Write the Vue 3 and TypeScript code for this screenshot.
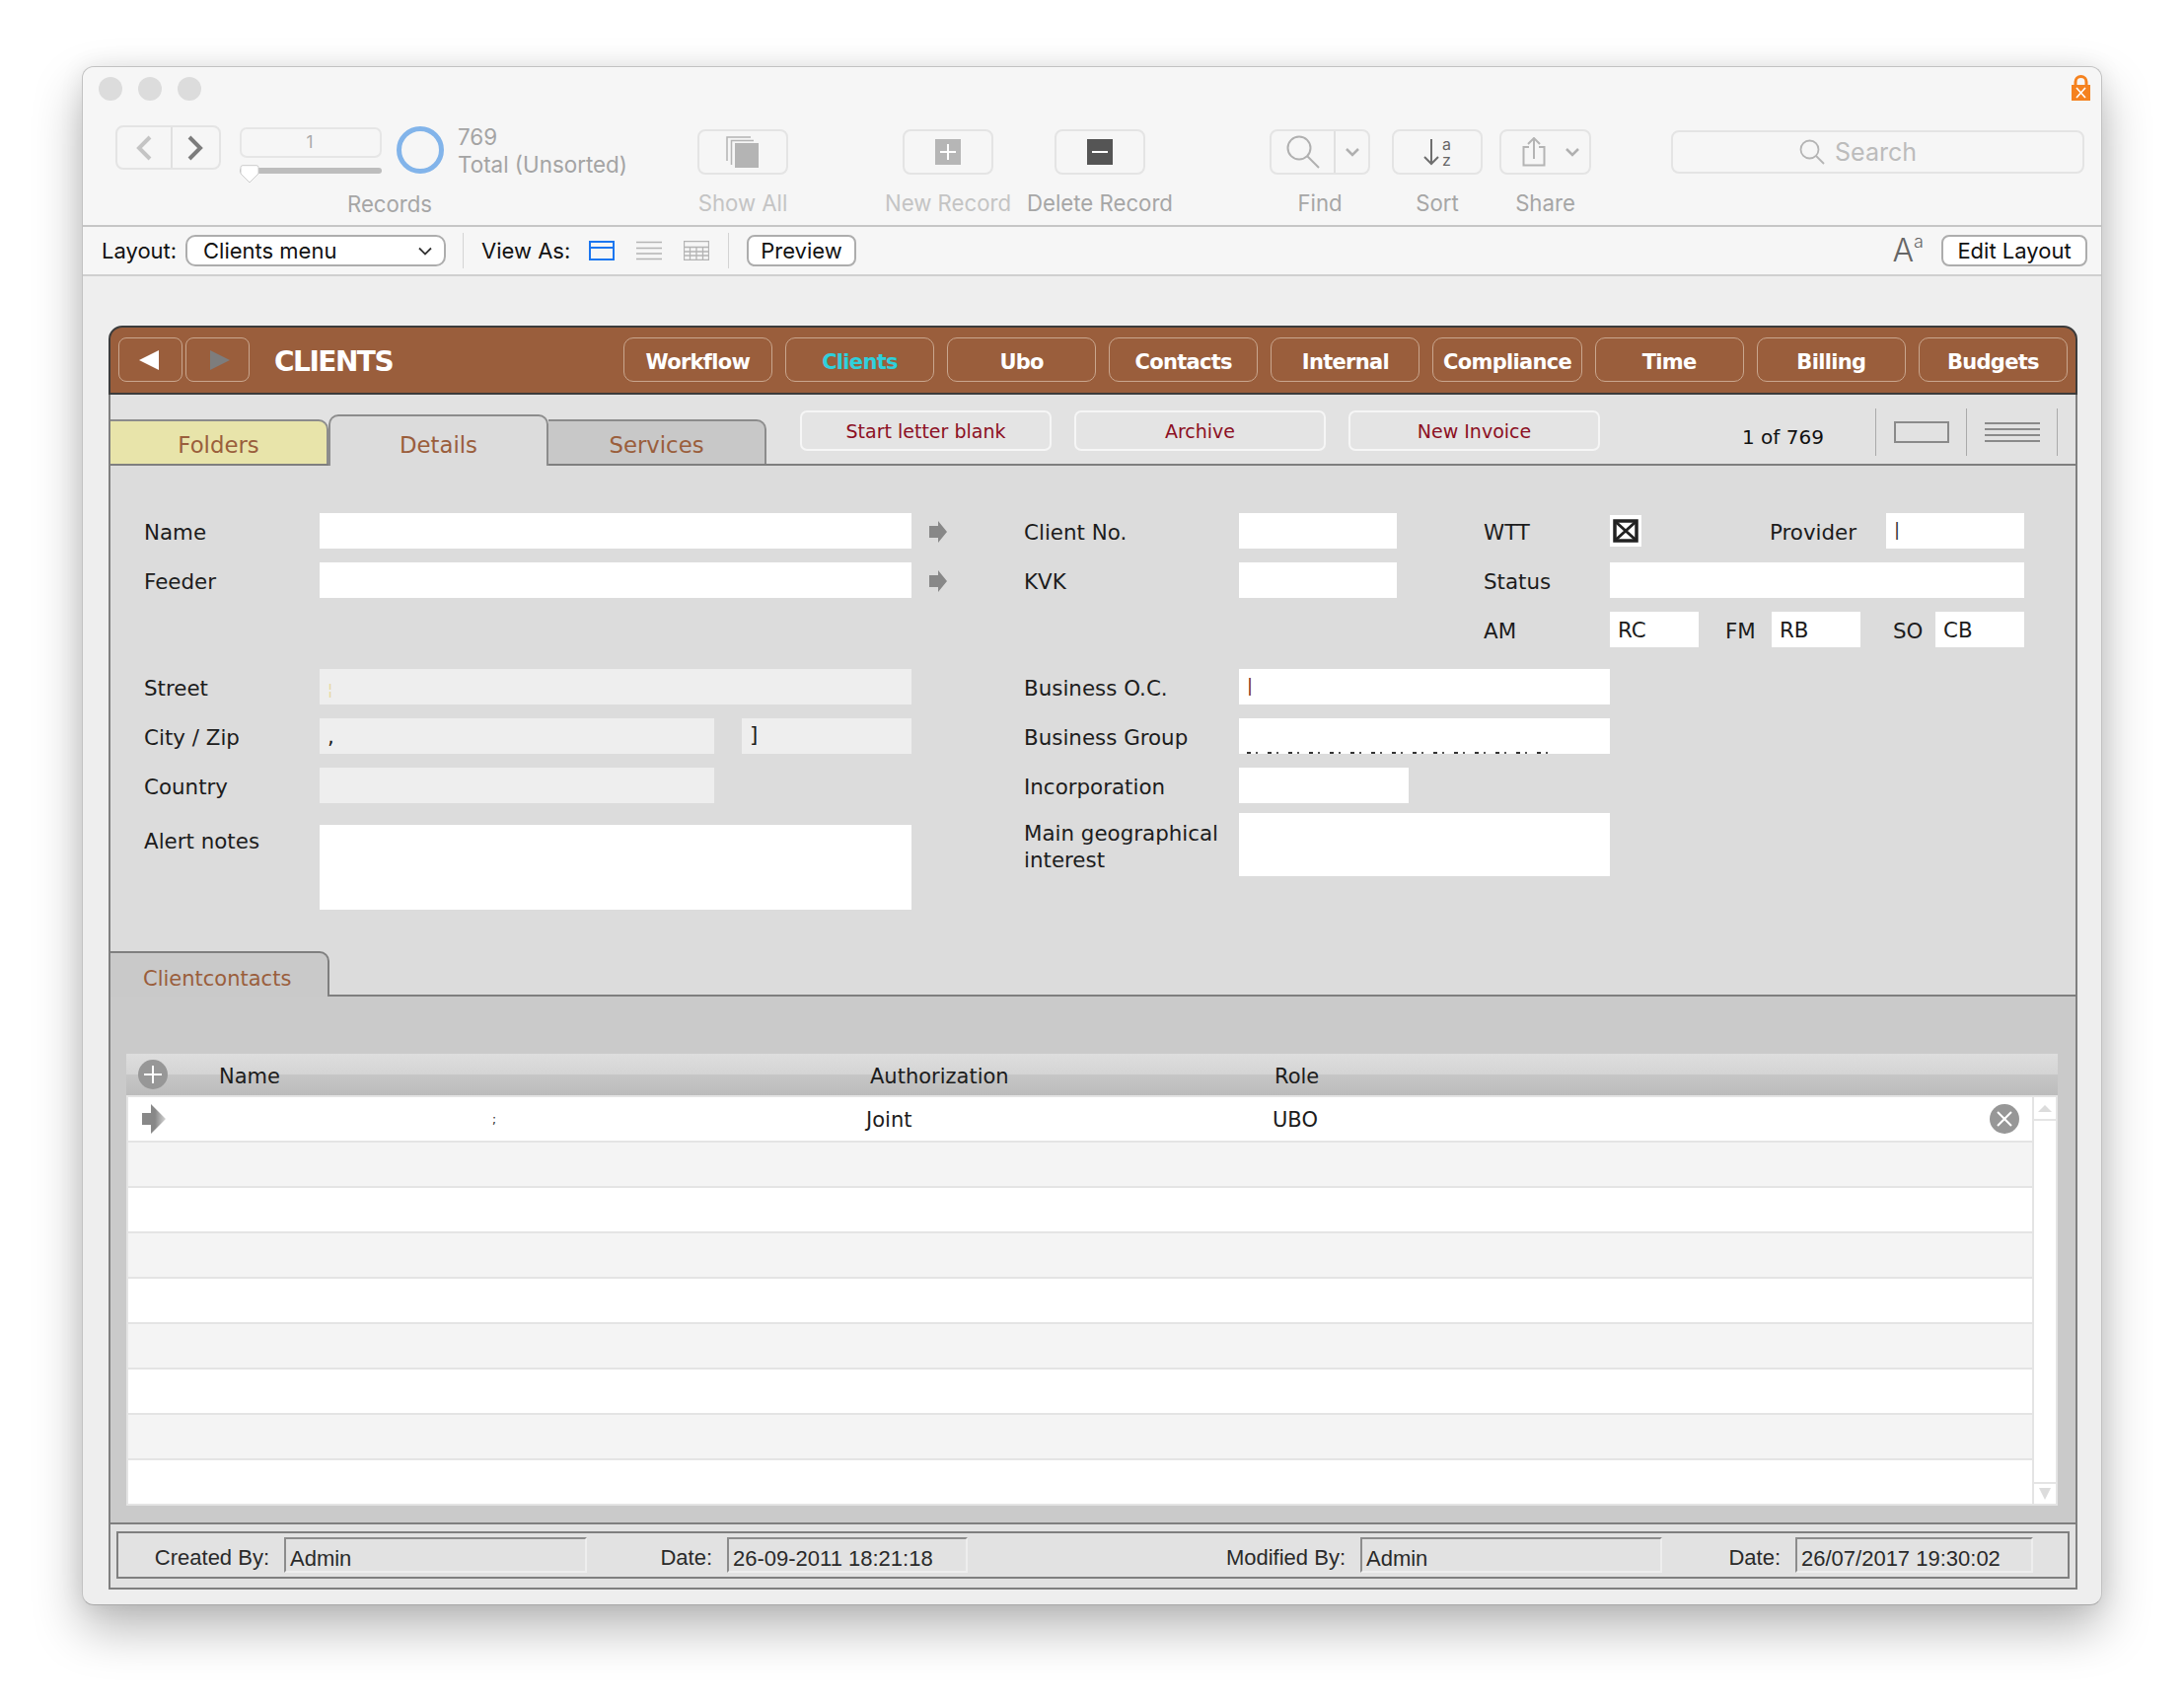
<script setup lang="ts">
const navButtons = ["Workflow", "Clients", "Ubo", "Contacts", "Internal", "Compliance", "Time", "Billing", "Budgets"];
const actions = ["Start letter blank", "Archive", "New Invoice"];
const rowCount = 9;
</script>

<template>
  <div class="page">
    <div class="window">
      <!-- title + toolbar -->
      <div class="titleRow">
        <div class="lights"><i></i><i></i><i></i></div>
        <svg class="lock" width="19" height="26" viewBox="0 0 19 26">
          <path d="M4 11V7a5.5 5.5 0 0 1 11 0v4" fill="none" stroke="#f5821f" stroke-width="3" />
          <rect x="0" y="10" width="19" height="16" fill="#f5821f" />
          <path d="M5 13l9 10M14 13L5 23" stroke="#fff" stroke-width="1.6" />
        </svg>
      </div>

      <div class="toolbar">
        <div class="recordsGroup">
          <div class="recordsTop">
            <div class="segNav">
              <span class="segCell">
                <svg width="20" height="28" viewBox="0 0 20 28"><path d="M16 3L5 14l11 11" fill="none" stroke="#c4c4c4" stroke-width="4" /></svg>
              </span>
              <span class="segCell segLast">
                <svg width="20" height="28" viewBox="0 0 20 28"><path d="M3 3l11 11L3 25" fill="none" stroke="#7c7c7c" stroke-width="4" /></svg>
              </span>
            </div>
            <div class="recordPick">
              <div class="recordField">1</div>
              <div class="slider">
                <svg class="sliderHandle" width="20" height="19" viewBox="0 0 20 19">
                  <path d="M3 .7h14a2 2 0 0 1 2 2V9l-9 9-9-9V2.700a2 2 0 0 1 2-2z" fill="#fff" stroke="#ccc" />
                </svg>
              </div>
            </div>
            <svg class="ring" width="48" height="48" viewBox="0 0 48 48">
              <circle cx="24" cy="24" r="21.500" fill="none" stroke="#82b4ea" stroke-width="5" />
            </svg>
            <div class="counts">
              <div>769</div>
              <div>Total (Unsorted)</div>
            </div>
          </div>
          <div class="toolLabel">Records</div>
        </div>

        <div class="tool showAll">
          <div class="toolBox">
            <svg width="34" height="32" viewBox="0 0 34 32">
              <rect x="9" y="7" width="24" height="25" fill="#b4b4b4" />
              <path d="M5.500 29V4.500H28M1 25V1h24" fill="none" stroke="#b4b4b4" stroke-width="1.500" />
            </svg>
          </div>
          <div class="toolLabel faint">Show All</div>
        </div>
        <div class="tool newRec">
          <div class="toolBox">
            <svg width="26" height="26" viewBox="0 0 26 26">
              <rect width="26" height="26" fill="#b6b6b6" />
              <path d="M13 5v16M5 13h16" stroke="#fff" stroke-width="2" />
            </svg>
          </div>
          <div class="toolLabel faint">New Record</div>
        </div>
        <div class="tool delRec">
          <div class="toolBox">
            <svg width="26" height="26" viewBox="0 0 26 26">
              <rect width="26" height="26" fill="#555" />
              <path d="M5 13h16" stroke="#fff" stroke-width="2" />
            </svg>
          </div>
          <div class="toolLabel">Delete Record</div>
        </div>
        <div class="tool find">
          <div class="toolBox">
            <span class="findGlass">
              <svg width="34" height="34" viewBox="0 0 34 34">
                <circle cx="13" cy="13" r="11.500" fill="none" stroke="#b0b0b0" stroke-width="2" />
                <path d="M21 21l12 12" stroke="#b0b0b0" stroke-width="2" />
              </svg>
            </span>
            <span class="findMore">
              <svg width="14" height="10" viewBox="0 0 14 10"><path d="M1 2l6 6 6-6" fill="none" stroke="#b0b0b0" stroke-width="2.500" /></svg>
            </span>
          </div>
          <div class="toolLabel">Find</div>
        </div>
        <div class="tool sort">
          <div class="toolBox sortBox">
            <svg width="16" height="28" viewBox="0 0 16 28"><path d="M8 1v25M1 19l7 7 7-7" fill="none" stroke="#6e6e6e" stroke-width="2" /></svg>
            <span class="sortLetters"><span>a</span><span>z</span></span>
          </div>
          <div class="toolLabel">Sort</div>
        </div>
        <div class="tool share">
          <div class="toolBox shareBox">
            <svg width="24" height="30" viewBox="0 0 24 30">
              <path d="M7 10H1.500v18.500h21V10H17" fill="none" stroke="#b4b4b4" stroke-width="2" />
              <path d="M12 22V1.500M6 7l6-6 6 6" fill="none" stroke="#b4b4b4" stroke-width="2" />
            </svg>
            <svg width="14" height="10" viewBox="0 0 14 10"><path d="M1 2l6 6 6-6" fill="none" stroke="#b0b0b0" stroke-width="2.500" /></svg>
          </div>
          <div class="toolLabel">Share</div>
        </div>
        <div class="searchBox">
          <svg width="26" height="26" viewBox="0 0 26 26">
            <circle cx="10.500" cy="10.500" r="9" fill="none" stroke="#b4b4b4" stroke-width="1.800" />
            <path d="M17 17l8 8" stroke="#b4b4b4" stroke-width="1.800" />
          </svg>
          <span>Search</span>
        </div>
      </div>

      <div class="layoutBar">
        <span class="barLabel layoutLabel">Layout:</span>
        <div class="layoutSelect">
          <span>Clients menu</span>
          <svg width="14" height="9" viewBox="0 0 14 9"><path d="M1 1.500l6 6 6-6" fill="none" stroke="#333" stroke-width="1.800" /></svg>
        </div>
        <span class="barSep"></span>
        <span class="barLabel viewAs">View As:</span>
        <svg class="viewIcon" width="26" height="20" viewBox="0 0 26 20">
          <rect x="1" y="1" width="24" height="18" fill="none" stroke="#1b76f0" stroke-width="2" />
          <path d="M1 7h24" stroke="#1b76f0" stroke-width="2" />
        </svg>
        <svg class="viewIcon" width="26" height="20" viewBox="0 0 26 20">
          <path d="M0 1.500h26M0 7.500h26M0 13h26M0 18.500h26" stroke="#b4b4b4" stroke-width="1.600" />
        </svg>
        <svg class="viewIcon" width="26" height="20" viewBox="0 0 26 20">
          <path d="M.5 .5h25v19H.5zM.5 6.500h25M.5 11h25M.5 15h25M6.500 6.500v13M13 6.500v13M19.500 6.500v13" fill="none" stroke="#b4b4b4" stroke-width="1.300" />
        </svg>
        <span class="barSep previewSep"></span>
        <button class="barBtn previewBtn">Preview</button>
        <span class="fontSize">A<sup>a</sup></span>
        <button class="barBtn editBtn">Edit Layout</button>
      </div>

      <!-- filemaker layout -->
      <div class="content">
        <div class="panel">
          <div class="brown">
            <button class="pager pagerPrev">
              <svg width="20" height="20" viewBox="0 0 20 20"><path d="M20 0v20L0 10z" fill="#fff" /></svg>
            </button>
            <button class="pager pagerNext">
              <svg width="20" height="20" viewBox="0 0 20 20"><path d="M0 0v20l20-10z" fill="#7d7d7d" /></svg>
            </button>
            <div class="brownTitle">CLIENTS</div>
            <div class="navButtons">
              <button v-for="b in navButtons" :key="b" class="navBtn" :class="{ navActive: b === 'Clients' }">{{ b }}</button>
            </div>
          </div>

          <div class="tabRow">
            <div class="tab tabFolders">Folders</div>
            <div class="tab tabDetails">Details</div>
            <div class="tab tabServices">Services</div>
            <div class="actions">
              <button v-for="a in actions" :key="a" class="actionBtn">{{ a }}</button>
            </div>
            <div class="recCount">1 of 769</div>
            <div class="viewSwitch">
              <span class="viewCell"><i class="oneRect"></i></span>
              <span class="viewCell viewCellLast">
                <svg width="56" height="20" viewBox="0 0 56 20"><path d="M0 1h56M0 7h56M0 13h56M0 19h56" stroke="#8a8a8a" stroke-width="1.800" /></svg>
              </span>
            </div>
          </div>

          <div class="details">
            <div class="formCol leftCol">
              <div class="row">
                <label class="lbl lblLeft">Name</label>
                <div class="field w600"></div>
                <svg class="goArrow" width="18" height="22" viewBox="0 0 18 22"><path d="M0 5h9V0l9 11-9 11v-5H0z" fill="#888" /></svg>
              </div>
              <div class="row">
                <label class="lbl lblLeft">Feeder</label>
                <div class="field w600"></div>
                <svg class="goArrow" width="18" height="22" viewBox="0 0 18 22"><path d="M0 5h9V0l9 11-9 11v-5H0z" fill="#888" /></svg>
              </div>
              <div class="row rowGap">
                <label class="lbl lblLeft">Street</label>
                <div class="field ro w600"><span class="speck">¦</span></div>
              </div>
              <div class="row">
                <label class="lbl lblLeft">City / Zip</label>
                <div class="field ro w400">,</div>
                <div class="field ro zip">]</div>
              </div>
              <div class="row">
                <label class="lbl lblLeft">Country</label>
                <div class="field ro w400"></div>
              </div>
              <div class="row rowAlert">
                <label class="lbl lblLeft">Alert notes</label>
                <div class="field w600 alert"></div>
              </div>
            </div>

            <div class="formCol rightCol">
              <div class="row">
                <label class="lbl lblMid">Client No.</label>
                <div class="field w160"></div>
                <label class="lbl lblRight">WTT</label>
                <div class="check">
                  <svg width="26" height="24" viewBox="0 0 26 24">
                    <rect x="2" y="2" width="22" height="20" fill="none" stroke="#222" stroke-width="3.500" />
                    <path d="M3 3l20 18M23 3L3 21" stroke="#222" stroke-width="3" />
                  </svg>
                </div>
                <label class="lbl lblProvider">Provider</label>
                <div class="field w140 cursor">|</div>
              </div>
              <div class="row">
                <label class="lbl lblMid">KVK</label>
                <div class="field w160"></div>
                <label class="lbl lblRight">Status</label>
                <div class="field w420"></div>
              </div>
              <div class="row rowStaff">
                <label class="lbl lblStaff">AM</label>
                <div class="field w90">RC</div>
                <label class="lbl lblFm">FM</label>
                <div class="field w90">RB</div>
                <label class="lbl lblSo">SO</label>
                <div class="field w90">CB</div>
              </div>
              <div class="row rowBusiness">
                <label class="lbl lblMid">Business O.C.</label>
                <div class="field w376 cursorRed">|</div>
              </div>
              <div class="row">
                <label class="lbl lblMid">Business Group</label>
                <div class="field w376 clipped"><i></i></div>
              </div>
              <div class="row">
                <label class="lbl lblMid">Incorporation</label>
                <div class="field w172"></div>
              </div>
              <div class="row rowGeo">
                <label class="lbl lblMid lblWrap">Main geographical interest</label>
                <div class="field w376 geo"></div>
              </div>
            </div>
          </div>

          <div class="contactsTabRow">
            <div class="contactsTab">Clientcontacts</div>
          </div>

          <div class="portal">
            <div class="portalHead">
              <span class="addCell">
                <svg width="30" height="30" viewBox="0 0 30 30">
                  <circle cx="15" cy="15" r="15" fill="#979797" />
                  <path d="M15 6v18M6 15h18" stroke="#fff" stroke-width="2" />
                </svg>
              </span>
              <span class="headName">Name</span>
              <span class="headAuth">Authorization</span>
              <span>Role</span>
            </div>
            <div class="portalBody">
              <div class="portalRows">
                <div v-for="n in rowCount" :key="n" class="pRow" :class="{ pRowAlt: n % 2 === 0 }">
                  <template v-if="n === 1">
                    <svg class="rowArrow" width="24" height="30" viewBox="0 0 24 30">
                      <defs>
                        <linearGradient id="fade" x1="0" x2="1" y1="0" y2="0">
                          <stop offset="0.55" stop-color="#888" />
                          <stop offset="1" stop-color="#d4d4d4" />
                        </linearGradient>
                      </defs>
                      <path d="M0 9h9V0l15 15L9 30v-9H0z" fill="url(#fade)" />
                    </svg>
                    <span class="cellName">;</span>
                    <span class="cellAuth">Joint</span>
                    <span class="cellRole">UBO</span>
                    <svg class="rowDelete" width="30" height="30" viewBox="0 0 30 30">
                      <circle cx="15" cy="15" r="15" fill="#979797" />
                      <path d="M8 8l14 14M22 8L8 22" stroke="#fff" stroke-width="2" />
                    </svg>
                  </template>
                </div>
              </div>
              <div class="scrollbar">
                <div class="scrollBtn">
                  <svg width="14" height="7" viewBox="0 0 14 7"><path d="M0 7l7-7 7 7z" fill="#dcdcdc" /></svg>
                </div>
                <div class="scrollBtn scrollBtnDown">
                  <svg width="14" height="12" viewBox="0 0 14 12"><path d="M1 0h12L7 12z" fill="#dcdcdc" /></svg>
                </div>
              </div>
            </div>
          </div>

          <div class="audit">
            <div class="auditBox">
              <span class="auditLabel a1">Created By:</span>
              <span class="auditField f1">Admin</span>
              <span class="auditLabel a2">Date:</span>
              <span class="auditField f2">26-09-2011 18:21:18</span>
              <span class="auditLabel a3">Modified By:</span>
              <span class="auditField f3">Admin</span>
              <span class="auditLabel a4">Date:</span>
              <span class="auditField f4">26/07/2017 19:30:02</span>
            </div>
          </div>
        </div>
      </div>
    </div>
  </div>
</template>

<style>
html,
body {
  margin: 0;
  background: #fff;
}
</style>

<style scoped>
* {
  box-sizing: border-box;
}

.page {
  width: 2214px;
  height: 1726px;
  padding: 67px 0 0 83px;
  overflow: hidden;
  background: #fff;
}

.window {
  width: 2048px;
  height: 1560px;
  background: #eeeeee;
  border: 1px solid #c2c2c2;
  border-bottom-color: #a8a8a8;
  border-radius: 12px;
  overflow: visible;
  box-shadow: 0 24px 50px rgba(0, 0, 0, 0.28), 0 0 24px rgba(0, 0, 0, 0.08);
  font-family: Inter, sans-serif;
}

.titleRow {
  display: flex;
  justify-content: space-between;
  height: 59px;
  padding: 8px 11px 0 16px;
  background: #f6f6f6;
  border-radius: 12px 12px 0 0;
}

.lights {
  display: flex;
  gap: 16px;
  padding-top: 2px;
}

.lights i {
  width: 24px;
  height: 24px;
  border-radius: 50%;
  background: #dcdcdc;
}

.toolbar {
  display: flex;
  height: 103px;
  background: #f6f6f6;
  border-bottom: 2px solid #c6c6c6;
  padding-left: 33px;
  color: #a8a8a8;
  font-size: 21px;
}

.recordsGroup {
  width: 556px;
  display: flex;
  flex-direction: column;
  align-items: center;
}

.recordsTop {
  display: flex;
  width: 100%;
  height: 50px;
}

.segNav {
  display: flex;
  width: 107px;
  height: 45px;
  border: 2px solid #e4e4e4;
  border-radius: 8px;
}

.segCell {
  width: 54px;
  display: flex;
  align-items: center;
  justify-content: center;
}

.segLast {
  flex: 1;
  border-left: 2px solid #e0e0e0;
}

.recordPick {
  width: 144px;
  margin-left: 19px;
  padding-top: 2px;
}

.recordField {
  height: 31px;
  border: 2px solid #e6e6e6;
  border-radius: 7px;
  padding-right: 2px;
  text-align: center;
  line-height: 27px;
  font-size: 17px;
  color: #aaa;
}

.slider {
  position: relative;
  height: 6px;
  margin-top: 10px;
  background: #bdbdbd;
  border-radius: 3px;
}

.sliderHandle {
  position: absolute;
  left: 0;
  top: -3px;
}

.ring {
  margin: 1px 0 0 15px;
}

.counts {
  margin: -2px 0 0 14px;
  line-height: 28px;
  font-size: 22.400px;
  color: #a4a4a4;
  white-space: nowrap;
}

.tool {
  display: flex;
  flex-direction: column;
  align-items: center;
  width: 92px;
  padding-top: 4px;
}

.toolBox {
  width: 100%;
  height: 46px;
  flex: none;
  display: flex;
  align-items: center;
  justify-content: center;
  border: 2px solid #e4e4e4;
  border-radius: 8px;
}

.toolLabel {
  margin-top: 16px;
  line-height: 26px;
  white-space: nowrap;
  font-size: 22.200px;
  color: #a6a6a6;
}

.recordsGroup .toolLabel {
  margin-top: 17px;
}

.faint {
  color: #c4c4c4;
}

.showAll {
  margin-left: 34px;
}

.newRec {
  margin-left: 116px;
}

.delRec {
  margin-left: 62px;
}

.find {
  width: 102px;
  margin-left: 126px;
}

.findGlass {
  width: 65px;
  height: 100%;
  display: flex;
  align-items: center;
  justify-content: center;
  border-right: 2px solid #e0e0e0;
}

.findMore {
  flex: 1;
  display: flex;
  justify-content: center;
}

.sort {
  margin-left: 22px;
}

.sortBox {
  gap: 3px;
}

.sortLetters {
  display: flex;
  flex-direction: column;
  line-height: 16px;
  font-size: 16px;
  color: #666;
}

.share {
  width: 93px;
  margin-left: 17px;
}

.shareBox {
  justify-content: flex-start;
  gap: 20px;
  padding-left: 21px;
}

.searchBox {
  display: flex;
  align-items: center;
  justify-content: center;
  gap: 10px;
  width: 419px;
  height: 44px;
  margin: 5px 0 0 81px;
  padding-right: 40px;
  border: 2px solid #e4e4e4;
  border-radius: 8px;
  font-size: 25px;
  color: #bcbcbc;
}

.layoutBar {
  display: flex;
  align-items: center;
  height: 50px;
  background: #f6f6f6;
  border-bottom: 2px solid #cfcfcf;
  padding-left: 19px;
  font-size: 22px;
  color: #111;
}

.barLabel {
  white-space: nowrap;
}

.layoutLabel {
  width: 85px;
}

.layoutSelect {
  display: flex;
  align-items: center;
  justify-content: space-between;
  width: 264px;
  height: 32px;
  padding: 0 12px 0 16px;
  border: 2px solid #adadad;
  border-radius: 10px;
  background: #fff;
}

.barSep {
  width: 1px;
  height: 36px;
  margin-left: 17px;
  background: #d4d4d4;
}

.viewAs {
  width: 109px;
  margin-left: 18px;
}

.viewIcon {
  margin-right: 22px;
}

.previewSep {
  margin-left: -3px;
}

.barBtn {
  height: 32px;
  padding: 0;
  border: 2px solid #adadad;
  border-radius: 8px;
  background: #fff;
  font: inherit;
  color: #111;
}

.previewBtn {
  width: 111px;
  margin-left: 18px;
}

.fontSize {
  margin-left: auto;
  font-size: 32px;
  font-weight: 300;
  color: #666;
  line-height: 32px;
}

.fontSize sup {
  font-size: 18px;
  vertical-align: 14px;
  line-height: 0;
}

.editBtn {
  width: 148px;
  margin: 0 14px 0 18px;
}

.content {
  padding: 50px 0 0 26px;
}

.panel {
  width: 1996px;
  font-family: "DejaVu Sans", sans-serif;
}

.brown {
  display: flex;
  height: 70px;
  padding: 10px 8px 0 8px;
  background: #9a5e3c;
  border: 2px solid #3c3c3c;
  border-radius: 14px 14px 0 0;
}

.pager {
  display: flex;
  align-items: center;
  justify-content: center;
  width: 65px;
  height: 45px;
  padding: 0;
  background: transparent;
  border: 1px solid #c9a68e;
  border-radius: 8px;
}

.pagerPrev {
  padding-right: 4px;
}

.pagerNext {
  margin-left: 3px;
  padding-left: 4px;
}

.brownTitle {
  margin-left: 25px;
  line-height: 50px;
  color: #fff;
  font-size: 28px;
  font-weight: bold;
  letter-spacing: -1.5px;
}

.navButtons {
  display: flex;
  gap: 13px;
  margin-left: auto;
}

.navBtn {
  width: 151.150px;
  height: 45px;
  padding: 0;
  background: transparent;
  border: 1px solid #c9a68e;
  border-radius: 10px;
  color: #fff;
  font-family: "DejaVu Sans", sans-serif;
  font-size: 21px;
  font-weight: bold;
  letter-spacing: -0.7px;
  line-height: 48px;
}

.navActive {
  color: #2fd0dc;
}

.tabRow {
  display: flex;
  align-items: flex-end;
  height: 72px;
  background: #e2e2e2;
  border-left: 2px solid #7f7f7f;
  border-right: 2px solid #7f7f7f;
  border-bottom: 2px solid #7f7f7f;
  padding-right: 18px;
}

.tab {
  display: flex;
  align-items: center;
  justify-content: center;
  width: 221px;
  height: 45px;
  padding-top: 4px;
  border-top: 2px solid #8c8c8c;
  border-right: 2px solid #8c8c8c;
  border-radius: 0 10px 0 0;
  color: #9a5e3c;
  font-size: 22.800px;
}

.tabFolders {
  width: 221px;
  background: #e8e4aa;
}

.tabDetails {
  width: 223px;
  height: 52px;
  margin: 0 0 -2px 0;
  padding-top: 7px;
  background: #dcdcdc;
  border-left: 2px solid #8c8c8c;
  border-radius: 10px 10px 0 0;
}

.tabServices {
  width: 221px;
  background: #c8c8c8;
}

.actions {
  display: flex;
  gap: 23px;
  margin: 0 0 13px 34px;
}

.actionBtn {
  width: 255px;
  height: 41px;
  padding: 0;
  background: #e4e4e4;
  border: 2px solid #f6f6f6;
  border-radius: 7px;
  color: #8c0f23;
  font-family: "DejaVu Sans", sans-serif;
  font-size: 19px;
}

.recCount {
  margin: 0 0 14px 144px;
  font-size: 20px;
  line-height: 26px;
  color: #111;
  white-space: nowrap;
}

.viewSwitch {
  display: flex;
  margin: 0 0 8px auto;
  height: 48px;
}

.viewCell {
  display: flex;
  align-items: center;
  justify-content: center;
  width: 92px;
  border-left: 1.500px solid #aaa;
}

.viewCellLast {
  width: 93px;
  border-right: 1.500px solid #aaa;
}

.oneRect {
  width: 56px;
  height: 22px;
  border: 2px solid #8a8a8a;
}

.details {
  display: flex;
  height: 492px;
  padding: 48px 0 0 34px;
  background: #dcdcdc;
  border-left: 2px solid #7f7f7f;
  border-right: 2px solid #7f7f7f;
  color: #1c1c1c;
  font-size: 21.400px;
}

.leftCol {
  width: 892px;
  flex: none;
}

.row {
  display: flex;
  align-items: flex-start;
  margin-bottom: 14px;
}

.rowGap {
  margin-top: 72px;
}

.rowAlert {
  margin-top: 22px;
}

.rowAlert .lbl {
  line-height: 33px;
}

.rowStaff {
  margin-left: 466px;
}

.rowBusiness {
  margin-top: 22px;
}

.rowGeo {
  margin-top: -4px;
}

.lbl {
  flex: none;
  display: block;
  height: 36px;
  line-height: 40px;
  white-space: nowrap;
}

.lblLeft {
  width: 178px;
}

.lblMid {
  width: 218px;
}

.lblWrap {
  height: auto;
  padding-top: 7px;
  padding-right: 10px;
  line-height: 27px;
  white-space: normal;
}

.lblRight {
  width: 128px;
  margin-left: 88px;
}

.lblProvider {
  width: 118px;
  margin-left: 130px;
}

.lblStaff {
  width: 128px;
}

.lblFm {
  width: 47px;
  margin-left: 27px;
}

.lblSo {
  width: 43px;
  margin-left: 33px;
}

.field {
  height: 36px;
  flex: none;
  padding-left: 8px;
  background: #fff;
  line-height: 38px;
  white-space: nowrap;
  overflow: hidden;
}

.ro {
  background: #eeeeee;
}

.w600 {
  width: 600px;
}

.w400 {
  width: 400px;
}

.zip {
  width: 172px;
  margin-left: 28px;
  line-height: 33px;
}

.w160 {
  width: 160px;
}

.w140 {
  width: 140px;
}

.w420 {
  width: 420px;
}

.w90 {
  width: 90px;
}

.w376 {
  width: 376px;
}

.w172 {
  width: 172px;
}

.alert {
  height: 86px;
}

.geo {
  height: 64px;
}

.speck {
  color: #e8d9a0;
  font-size: 16px;
}

.cursor {
  font-size: 18px;
  color: #333;
  line-height: 34px;
}

.cursorRed {
  font-size: 18px;
  color: #7a2c10;
  line-height: 34px;
}

.clipped {
  display: flex;
  align-items: flex-end;
}

.clipped i {
  width: 308px;
  height: 2px;
  background: repeating-linear-gradient(90deg, #333 0 4px, transparent 4px 9px, #555 9px 11px, transparent 11px 21px);
}

.goArrow {
  margin: 8px 0 0 18px;
}

.check {
  display: flex;
  align-items: center;
  justify-content: center;
  width: 32px;
  height: 32px;
  margin-top: 2px;
  background: #fff;
}

.contactsTabRow {
  height: 46px;
  background: #dcdcdc;
  border-left: 2px solid #7f7f7f;
  border-right: 2px solid #7f7f7f;
  border-bottom: 2px solid #7f7f7f;
}

.contactsTab {
  display: flex;
  align-items: center;
  width: 222px;
  height: 46px;
  padding: 8px 0 0 33px;
  background: #c9c9c9;
  border-top: 2px solid #7f7f7f;
  border-right: 2px solid #7f7f7f;
  border-radius: 0 10px 0 0;
  color: #9a5e3c;
  font-size: 21px;
}

.portal {
  height: 535px;
  padding: 58px 18px 0 16px;
  background: #cacaca;
  border-left: 2px solid #7f7f7f;
  border-right: 2px solid #7f7f7f;
  border-bottom: 2px solid #7f7f7f;
}

.portalHead {
  display: flex;
  align-items: center;
  height: 42px;
  padding-top: 4px;
  background: linear-gradient(#dedede 0, #d4d4d4 50%, #c6c6c6 50%, #bcbcbc 100%);
  color: #1c1c1c;
  font-size: 21px;
}

.addCell {
  display: flex;
  width: 94px;
  padding-left: 12px;
  margin-top: -4px;
}

.headName {
  width: 660px;
}

.headAuth {
  width: 410px;
}

.portalBody {
  display: flex;
  height: 416px;
  background: #fff;
  border: 2px solid #e4e4e4;
  border-bottom-width: 0;
}

.portalRows {
  flex: 1;
  min-width: 0;
}

.pRow {
  display: flex;
  align-items: center;
  height: 46px;
  padding-top: 2px;
  border-bottom: 2px solid #e4e4e4;
  background: #fff;
  color: #1c1c1c;
  font-size: 21px;
  position: relative;
}

.pRowAlt {
  background: #f4f4f4;
}

.rowArrow {
  margin: -2px 0 0 14px;
}

.cellName {
  width: 656px;
  padding-left: 277px;
  margin-left: 54px;
  font-size: 12px;
}

.cellAuth {
  width: 412px;
}

.rowDelete {
  position: absolute;
  right: 13px;
  top: 7px;
}

.scrollbar {
  display: flex;
  flex-direction: column;
  justify-content: space-between;
  width: 24px;
  border-left: 2px solid #e4e4e4;
}

.scrollBtn {
  display: flex;
  align-items: center;
  justify-content: center;
  height: 24px;
  border-bottom: 2px solid #e4e4e4;
}

.scrollBtnDown {
  border-top: 2px solid #e4e4e4;
}

.audit {
  height: 66px;
  padding: 7px 6px 0 6px;
  background: #e2e2e2;
  border-left: 2px solid #7f7f7f;
  border-right: 2px solid #7f7f7f;
  border-bottom: 2px solid #7f7f7f;
}

.auditBox {
  display: flex;
  align-items: flex-start;
  height: 48px;
  padding-top: 4px;
  border: 2px solid #7f7f7f;
  font-family: "Liberation Sans", Arial, sans-serif;
  font-size: 22px;
  color: #2a2a2a;
}

.auditLabel {
  padding-right: 15px;
  text-align: right;
  line-height: 42px;
  white-space: nowrap;
}

.auditField {
  height: 36px;
  padding-left: 4px;
  border: 2px solid #eeeeee;
  border-top-color: #8c8c8c;
  border-left-color: #8c8c8c;
  line-height: 39px;
  white-space: nowrap;
}

.a1 {
  width: 168px;
}

.f1 {
  width: 307px;
}

.a2 {
  width: 142px;
}

.f2 {
  width: 244px;
}

.a3 {
  width: 398px;
}

.f3 {
  width: 306px;
}

.a4 {
  width: 135px;
}

.f4 {
  width: 241px;
}
</style>
